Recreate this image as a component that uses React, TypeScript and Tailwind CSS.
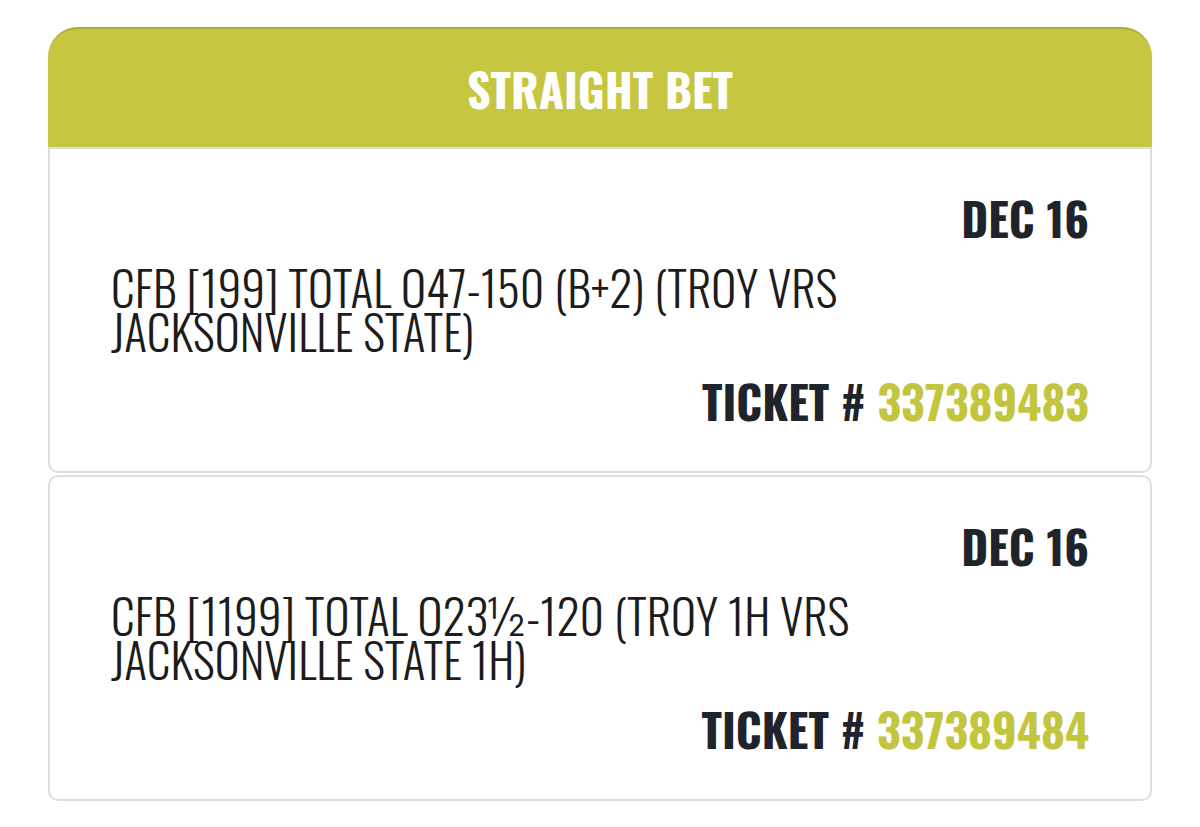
const bets = [
  {
    date: "DEC 16",
    line1: "CFB [199] TOTAL O47-150 (B+2) (TROY VRS",
    line2: "JACKSONVILLE STATE)",
    ticket: "337389483",
  },
  {
    date: "DEC 16",
    line1: "CFB [1199] TOTAL O23½-120 (TROY 1H VRS",
    line2: "JACKSONVILLE STATE 1H)",
    ticket: "337389484",
  },
];

function BetCard({ bet, first }: { bet: (typeof bets)[number]; first?: boolean }) {
  return (
    <div
      className={`border-2 border-[#dedede] bg-white px-[61px] pt-[46px] pb-[49px] ${
        first ? "rounded-b-[10px]" : "mt-[2px] rounded-[10px]"
      }`}
    >
      <div className="text-right text-[46px] leading-[44px] font-bold text-[#1f232b]">
        {bet.date}
      </div>
      <div className="mt-[26px] text-[47.5px] leading-[44px] font-light text-[#1c1c1c]">
        {bet.line1}
        <br />
        {bet.line2}
      </div>
      <div className="mt-[25px] text-right text-[46px] leading-[44px] font-bold text-[#1f232b]">
        TICKET # <span className="text-[#c4c53f]">{bet.ticket}</span>
      </div>
    </div>
  );
}

export default function App() {
  return (
    <div className="min-h-[827px] bg-white pt-[27px] px-[48px] font-['Oswald','Open_Sans',sans-serif]">
      <div className="flex h-[120px] items-center justify-center rounded-t-[30px] border-t-2 border-[#abab3a] bg-[#c6c641]">
        <span className="text-[46px] leading-[44px] font-bold text-white">STRAIGHT BET</span>
      </div>
      <BetCard bet={bets[0]} first />
      <BetCard bet={bets[1]} />
    </div>
  );
}
